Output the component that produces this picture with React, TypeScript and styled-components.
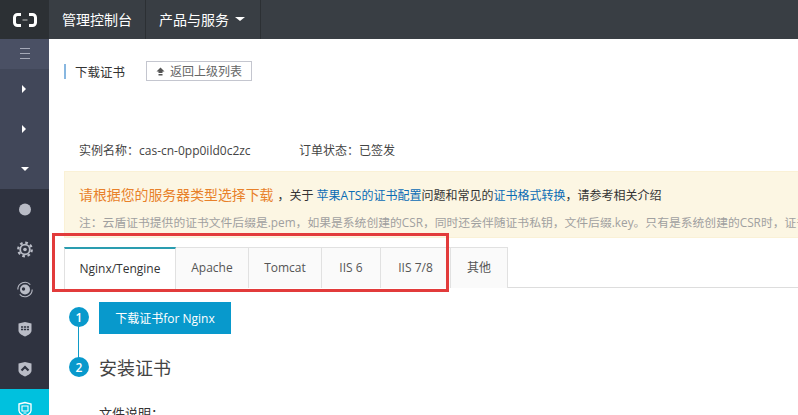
import React from 'react';
import styled, { createGlobalStyle } from 'styled-components';

const GlobalStyle = createGlobalStyle`
  html, body {
    margin: 0;
    padding: 0;
    width: 798px;
    height: 415px;
    overflow: hidden;
    background: #fff;
    font-family: "Open Sans", "Noto Sans CJK SC", sans-serif;
    font-size: 12px;
    color: #333;
  }
  * { box-sizing: border-box; }
`;

const Page = styled.div`
  width: 798px;
  height: 415px;
  position: relative;
  overflow: hidden;
  display: flex;
  flex-direction: column;
`;

const TopBar = styled.header`
  height: 39px;
  flex: none;
  display: flex;
  background: #393e44;
`;

const Logo = styled.div`
  width: 49px;
  display: flex;
  align-items: center;
  justify-content: center;
  background: #2c3034;
`;

const NavItem = styled.div`
  display: flex;
  align-items: center;
  gap: 6px;
  height: 39px;
  padding: 0 13px 1px 13px;
  color: #fff;
  font-size: 14px;
  border-right: 1px solid #2c3034;

  &:last-child {
    padding-right: 15px;
  }
`;

const Caret = styled.span<{ $size?: number }>`
  display: inline-block;
  border-left: ${p => p.$size ?? 4}px solid transparent;
  border-right: ${p => p.$size ?? 4}px solid transparent;
  border-top: ${p => (p.$size ? p.$size - 1 : 4)}px solid #fff;
`;

const Body = styled.div`
  flex: 1;
  display: flex;
  min-height: 0;
`;

const Sidebar = styled.aside`
  width: 49px;
  flex: none;
  display: flex;
  flex-direction: column;
  overflow: hidden;
  background: #2f3340;
`;

const Burger = styled.div`
  height: 30px;
  flex: none;
  display: flex;
  align-items: center;
  justify-content: center;
  background: #4a5064;
`;

const SideGroup = styled.div`
  height: 40px;
  flex: none;
  display: flex;
  align-items: center;
  justify-content: center;
  background: #414759;
`;

const ArrowRight = styled.span`
  display: block;
  margin-left: -2px;
  border-top: 4px solid transparent;
  border-bottom: 4px solid transparent;
  border-left: 4px solid #fff;
`;

const SideIcon = styled.div<{ $active?: boolean }>`
  height: 40px;
  flex: none;
  display: flex;
  align-items: center;
  justify-content: center;
  background: ${p => (p.$active ? '#00c1de' : 'transparent')};
`;

const Main = styled.main`
  flex: 1;
  min-width: 0;
  padding: 23px 0 0 15px;
  overflow: hidden;
`;

const TitleRow = styled.div`
  display: flex;
  align-items: center;
  height: 18px;
`;

const Title = styled.h1`
  margin: 0;
  height: 15px;
  display: flex;
  align-items: center;
  padding-left: 9px;
  border-left: 2px solid #88b7e0;
  font-size: 12.5px;
  font-weight: 400;
  color: #333;
`;

const BackButton = styled.div`
  margin-left: 21px;
  height: 20px;
  width: 106px;
  display: flex;
  align-items: center;
  justify-content: center;
  gap: 5px;
  border: 1px solid #c4c6cf;
  color: #666;
  font-size: 12px;
`;

const InfoRow = styled.div`
  margin: 61px 0 0 15px;
  height: 18px;
  display: flex;
  align-items: center;
  font-size: 12px;
  color: #444;
`;

const InfoCell = styled.span<{ $w?: number }>`
  width: ${p => (p.$w ? `${p.$w}px` : 'auto')};
  white-space: nowrap;
`;

const Notice = styled.div`
  margin-top: 12px;
  height: 67px;
  width: 760px;
  padding: 14px 0 0 14px;
  background: #fcf6e3;
  border: 1px solid #faf1d6;
  white-space: nowrap;
  overflow: hidden;
`;

const NoticeLine = styled.div`
  height: 18px;
  font-size: 12px;
  line-height: 18px;
  color: #333;
`;

const NoticeStrong = styled.span`
  color: #e8812a;
  font-size: 13.9px;
  line-height: 18px;
  margin-right: 4px;
`;

const NoticeLink = styled.span`
  color: #0a6cb5;
`;

const NoticeNote = styled.div`
  margin-top: 9px;
  font-size: 11.8px;
  line-height: 18px;
  color: #a0a0a0;
`;

const Tabs = styled.div`
  margin-top: 9px;
  height: 41px;
  display: flex;
  border-bottom: 1px solid #ddd;
`;

const Tab = styled.div<{ $w: number; $active?: boolean }>`
  width: ${p => p.$w}px;
  height: ${p => (p.$active ? 42 : 41)}px;
  padding-bottom: 2px;
  display: flex;
  align-items: center;
  justify-content: center;
  font-size: 12px;
  color: ${p => (p.$active ? '#333' : '#555')};
  background: ${p => (p.$active ? '#fff' : '#fafafa')};
  border-top: ${p => (p.$active ? '2px solid #2a9db0' : '1px solid #e1e1e1')};
  border-right: 1px solid #e1e1e1;
  border-left: ${p => (p.$active ? '1px solid #e1e1e1' : 'none')};
`;

const Steps = styled.div`
  margin-top: 14px;
  display: grid;
  grid-template-columns: 20px 1fr;
  column-gap: 10px;
  padding-left: 5px;
`;

const Rail = styled.div<{ $line?: boolean }>`
  position: relative;
  display: flex;
  justify-content: center;
  padding-top: ${p => (p.$line ? 5 : 0)}px;
  &::after {
    content: '';
    display: ${p => (p.$line ? 'block' : 'none')};
    position: absolute;
    top: 20px;
    bottom: -24px;
    left: 9px;
    width: 1px;
    background: #0f9bc8;
  }
`;

const Dot = styled.span`
  width: 20px;
  height: 20px;
  border-radius: 50%;
  background: #0899cc;
  color: #fff;
  font-size: 12px;
  font-weight: 600;
  display: flex;
  align-items: center;
  justify-content: center;
`;

const SecondDot = styled(Dot)`
  margin-top: 23px;
`;

const DownloadButton = styled.div`
  width: 132px;
  height: 32px;
  display: flex;
  align-items: center;
  justify-content: center;
  background: #0899cc;
  color: #fff;
  font-size: 12px;
`;

const StepTitle = styled.h2`
  margin: 0;
  height: 32px;
  margin-top: 17px;
  display: flex;
  align-items: center;
  font-size: 18px;
  font-weight: 400;
  color: #444;
`;

const FileLabel = styled.div`
  grid-column: 2;
  margin-top: 20px;
  font-size: 13px;
  color: #333;
`;

const Highlight = styled.div`
  position: absolute;
  left: 52px;
  top: 233px;
  width: 397px;
  height: 59px;
  border: 3px solid #e23b3b;
  pointer-events: none;
`;

const iconColor = '#b9bcc6';

const ShieldPath = 'M1.500 2.500L8 1l6.500 1.500v7c0 2.600-3 4.500-6.500 6-3.500-1.500-6.500-3.400-6.500-6z';

const Glyph = ({ children }: { children: React.ReactNode }) => (
  <svg width="16" height="17" viewBox="0 0 16 17" fill="none">{children}</svg>
);

const App: React.FC = () => (
  <Page>
    <GlobalStyle />
    <TopBar>
      <Logo>
        <svg width="24" height="14" viewBox="0 0 24 14" fill="none">
          <path d="M8 1.500H4.500a3 3 0 0 0-3 3v5a3 3 0 0 0 3 3H8" stroke="#fff" strokeWidth="3" />
          <path d="M16 1.500h3.500a3 3 0 0 1 3 3v5a3 3 0 0 1-3 3H16" stroke="#fff" strokeWidth="3" />
          <path d="M9.500 7h5" stroke="#aaa" strokeWidth="1.200" />
        </svg>
      </Logo>
      <NavItem>管理控制台</NavItem>
      <NavItem>产品与服务<Caret $size={5} /></NavItem>
    </TopBar>
    <Body>
      <Sidebar>
        <Burger>
          <svg width="10" height="12" viewBox="0 0 10 12" fill="none" stroke="#a5a9b8">
            <path d="M0 .5h10M0 5.500h10M0 10.500h10" />
          </svg>
        </Burger>
        <SideGroup><ArrowRight /></SideGroup>
        <SideGroup><ArrowRight /></SideGroup>
        <SideGroup><Caret /></SideGroup>
        <SideIcon>
          <Glyph><circle cx="8" cy="8.500" r="6" fill={iconColor} /></Glyph>
        </SideIcon>
        <SideIcon>
          <Glyph>
            <circle cx="8" cy="8.500" r="4.800" stroke={iconColor} strokeWidth="1.800" />
            <circle cx="8" cy="8.500" r="6.800" stroke={iconColor} strokeWidth="2.200" strokeDasharray="2.700 2.640" />
            <circle cx="8" cy="8.500" r="1.800" fill={iconColor} />
          </Glyph>
        </SideIcon>
        <SideIcon>
          <Glyph>
            <path d="M.8 8.500a7.200 7.200 0 0 1 12.500-4.800M15.200 8.500a7.200 7.200 0 0 1-12.500 4.800" stroke={iconColor} strokeWidth="1.100" />
            <circle cx="8" cy="8.500" r="5" fill={iconColor} />
            <circle cx="6.500" cy="8" r="1.700" fill="#2f3340" />
          </Glyph>
        </SideIcon>
        <SideIcon>
          <Glyph>
            <path d={ShieldPath} fill={iconColor} />
            <path d="M4 6h8M4 8.500h8" stroke="#2f3340" strokeWidth="1.300" strokeDasharray="2.200 .8" />
          </Glyph>
        </SideIcon>
        <SideIcon>
          <Glyph>
            <path d={ShieldPath} fill={iconColor} />
            <path d="M4.500 9.500L8 6l3.500 3.500" stroke="#2f3340" strokeWidth="2.200" />
          </Glyph>
        </SideIcon>
        <SideIcon $active>
          <Glyph>
            <path d="M2 3l6-1.500L14 3v6.500c0 2.400-2.800 4.200-6 5.500-3.200-1.300-6-3.100-6-5.500z" stroke="#fff" strokeWidth="1.400" />
            <path d="M5 5h6v5H5zM6.500 12h3" stroke="#fff" strokeWidth="1.100" />
          </Glyph>
        </SideIcon>
      </Sidebar>
      <Main>
        <TitleRow>
          <Title>下载证书</Title>
          <BackButton>
            <svg width="9" height="9" viewBox="0 0 9 9" fill="#555">
              <path d="M4.500 .5L8.500 4.500H6.500V6H2.500V4.500H.5zM2.500 7h4v1.500h-4z" />
            </svg>
            返回上级列表
          </BackButton>
        </TitleRow>
        <InfoRow>
          <InfoCell $w={220}>实例名称：cas-cn-0pp0ild0c2zc</InfoCell>
          <InfoCell>订单状态：已签发</InfoCell>
        </InfoRow>
        <Notice>
          <NoticeLine>
            <NoticeStrong>请根据您的服务器类型选择下载</NoticeStrong>，关于 <NoticeLink>苹果ATS的证书配置</NoticeLink>问题和常见的<NoticeLink>证书格式转换</NoticeLink>，请参考相关介绍
          </NoticeLine>
          <NoticeNote>
            注：云盾证书提供的证书文件后缀是.pem，如果是系统创建的CSR，同时还会伴随证书私钥，文件后缀.key。只有是系统创建的CSR时，证书才会提供私钥文件
          </NoticeNote>
        </Notice>
        <Tabs>
          <Tab $w={112} $active>Nginx/Tengine</Tab>
          <Tab $w={73}>Apache</Tab>
          <Tab $w={73}>Tomcat</Tab>
          <Tab $w={59}>IIS 6</Tab>
          <Tab $w={70}>IIS 7/8</Tab>
          <Tab $w={57}>其他</Tab>
        </Tabs>
        <Steps>
          <Rail $line><Dot>1</Dot></Rail>
          <DownloadButton>下载证书for Nginx</DownloadButton>
          <Rail><SecondDot>2</SecondDot></Rail>
          <StepTitle>安装证书</StepTitle>
          <FileLabel>文件说明：</FileLabel>
        </Steps>
      </Main>
    </Body>
    <Highlight />
  </Page>
);

export default App;
